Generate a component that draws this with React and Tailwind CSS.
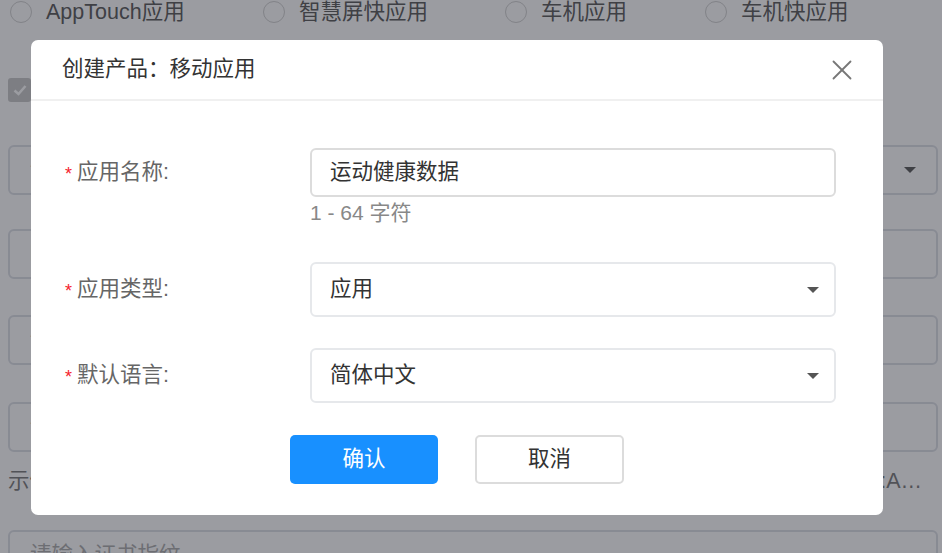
import { X } from 'lucide-react'

const font = { fontFamily: '"Liberation Sans", "Noto Sans CJK SC", sans-serif' }

function Caret() {
  return <span className="w-0 h-0 border-x-[6px] border-x-transparent border-t-[6px] border-t-[#555]" />
}

function Radio({ label, className = '' }) {
  return (
    <label className={`flex items-center gap-[14px] ${className}`}>
      <span className="w-[22px] h-[22px] rounded-full border border-[#d0d0d0] bg-white" />
      <span className="text-[21.5px] text-[#555]">{label}</span>
    </label>
  )
}

function BgInput({ children, className = '' }) {
  return (
    <div className={`h-[50px] ml-2 mr-1 border-2 border-[#dcdfe6] rounded-[6px] bg-white flex items-center px-5 text-[21.5px] text-[#aaa] ${className}`}>
      {children}
    </div>
  )
}

function Background() {
  return (
    <div className="flex flex-col">
      <div className="flex items-center h-[24px] pl-[10px]">
        <Radio label="AppTouch应用" className="w-[253px]" />
        <Radio label="智慧屏快应用" className="w-[242px]" />
        <Radio label="车机应用" className="w-[200px]" />
        <Radio label="车机快应用" />
      </div>
      <div className="mt-[54px] ml-2 w-[23px] h-[24px] rounded-[3px] bg-[#c8c8c8] flex items-center justify-center">
        <svg width="14" height="12" viewBox="0 0 14 12" fill="none" stroke="#fff" strokeWidth="2.5"><path d="M1.5 6.5 L5.5 10 L12.5 2" /></svg>
      </div>
      <BgInput className="mt-[43px] justify-between">
        <span>请</span>
        <Caret />
      </BgInput>
      <BgInput className="mt-[34px]">l</BgInput>
      <BgInput className="mt-[36px]">请</BgInput>
      <BgInput className="mt-[37px]">请</BgInput>
      <div className="mt-[13px] ml-2 mr-5 flex justify-between text-[21.5px] text-[#777]">
        <span>示例：</span>
        <span>AB:CD:EF:12:34:5B:A…</span>
      </div>
      <BgInput className="mt-[33px]">请输入证书指纹</BgInput>
    </div>
  )
}

function Field({ label, children }) {
  return (
    <div className="flex items-center">
      <div className="w-[245px] flex items-center shrink-0 text-[21.5px] text-[#666]">
        <span className="text-[#f5222d] text-[18px] w-[12px] mt-[4px]">*</span>
        <span>{label}:</span>
      </div>
      {children}
    </div>
  )
}

function SelectBox({ value }) {
  return (
    <div className="w-[526px] h-[55px] border-2 border-[#e6e8eb] rounded-[6px] flex items-center justify-between pl-[18px] pr-[15px] text-[21.5px] text-[#333]">
      <span>{value}</span>
      <Caret />
    </div>
  )
}

export default function App() {
  return (
    <div className="relative h-[553px] w-[942px] overflow-hidden bg-white" style={font}>
      <Background />
      <div className="absolute inset-0 bg-[rgba(38,40,50,0.46)]" />
      <div className="absolute left-[31px] top-[40px] w-[852px] h-[475px] bg-white rounded-[7px] flex flex-col">
        <div className="h-[61px] border-b-2 border-[#f0f0f0] flex items-center justify-between pl-[31px] pr-[24px]">
          <span className="text-[21.5px] text-[#333]">创建产品：移动应用</span>
          <X size={34} strokeWidth={1.3} className="text-[#777]" />
        </div>
        <div className="flex flex-col pl-[34px] pt-[47px]">
          <Field label="应用名称">
            <div className="w-[526px] h-[49px] border-2 border-[#dcdcdc] rounded-[6px] flex items-center pl-[18px] text-[21.5px] text-[#333]">
              运动健康数据
            </div>
          </Field>
          <div className="pl-[245px] mt-[4px] text-[21px] text-[#888] h-[24px] leading-[24px]">1 - 64 字符</div>
          <div className="mt-[37px]">
            <Field label="应用类型">
              <SelectBox value="应用" />
            </Field>
          </div>
          <div className="mt-[31px]">
            <Field label="默认语言">
              <SelectBox value="简体中文" />
            </Field>
          </div>
          <div className="mt-[32px] flex pl-[225px] gap-[37px]">
            <button className="w-[148px] h-[49px] rounded-[5px] bg-[#1890ff] text-white text-[21.5px]">确认</button>
            <button className="w-[149px] h-[49px] rounded-[5px] border-2 border-[#dcdcdc] bg-white text-[#333] text-[21.5px]">取消</button>
          </div>
        </div>
      </div>
    </div>
  )
}
